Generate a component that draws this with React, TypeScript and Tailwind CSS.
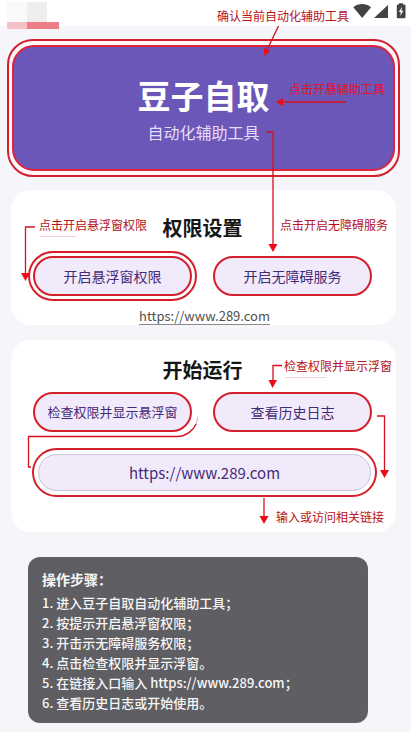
import type { ReactNode } from "react";

const steps = [
  "进入豆子自取自动化辅助工具；",
  "按提示开启悬浮窗权限；",
  "开击示无障碍服务权限；",
  "点击检查权限并显示浮窗。",
  "在链接入口输入 https://www.289.com；",
  "查看历史日志或开始使用。"
];

type ArrowProps = {
  className: string;
  width: number;
  height: number;
  line: string;
  head?: string;
  children?: ReactNode;
};

function Arrow({ className, width, height, line, head, children }: ArrowProps) {
  return (
    <svg
      aria-hidden="true"
      width={width}
      height={height}
      viewBox={`0 0 ${width} ${height}`}
      className={`pointer-events-none absolute z-10 ${className}`}
      fill="none"
    >
      {children}
      <path d={line} stroke="#d8101c" strokeWidth="1.3" />
      {head && <path d={head} fill="#ee0a18" />}
    </svg>
  );
}

function Note({ className, children }: { className: string; children: ReactNode }) {
  return (
    <span className={`pointer-events-none absolute z-10 whitespace-nowrap text-xs leading-4 ${className}`}>
      {children}
    </span>
  );
}

function PillButton({ className = "text-sm", children }: { className?: string; children: ReactNode }) {
  return (
    <button
      type="button"
      className={`h-10 whitespace-nowrap rounded-full border-2 border-[#d3202b] bg-[#f1eafb] text-[#452a78] ${className}`}
    >
      {children}
    </button>
  );
}

function StatusBar() {
  return (
    <header className="relative flex h-[26px] items-start justify-between bg-white pl-[7px] pr-1">
      <div aria-hidden="true" className="relative z-10 pt-0.5">
        <div className="flex h-5">
          <span className="w-5 bg-[#f9f9f9]" />
          <span className="w-5 bg-[#eeeeee]" />
        </div>
        <div className="flex h-[7px]">
          <span className="w-5 bg-[#f6c0c8]" />
          <span className="w-5 bg-[#ef7d88]" />
          <span className="w-3 bg-[#eb8089]" />
        </div>
      </div>

      <div className="flex items-start gap-1">
        <span className="pt-2 text-xs leading-4 text-[#b5121b]">确认当前自动化辅助工具</span>
        <svg aria-hidden="true" width="54" height="16" viewBox="0 0 54 16" className="mt-[3px]" fill="#434343">
          <path d="M0.3 4.2C5.5 0 12.7 0 18 4.2L9.2 15Z" />
          <path d="M35 2V15H21Z" />
          <path d="M46 1.6V0.3H50V1.6H51.5Q52.5 1.6 52.5 2.6V14.2Q52.5 15.2 51.5 15.2H44.8Q43.8 15.2 43.8 14.2V2.6Q43.8 1.6 44.8 1.6Z" />
          <path d="M49 3.8L45.8 9H47.8L47.2 13L50.4 7.8H48.4Z" fill="#fff" />
        </svg>
      </div>
      <Arrow
        className="right-[131px] top-[26px]"
        width={18}
        height={31}
        line="M16.5 0L4.5 25"
        head="M2.5 30L1.6 22L8.2 24.6Z"
      />
    </header>
  );
}

export default function App() {
  return (
    <div
      className="min-h-screen bg-[#f5f5fa] pb-2"
      style={{ fontFamily: '"Noto Sans CJK SC", "Noto Sans", sans-serif' }}
    >
      <StatusBar />

      <main className="pl-[11px] pr-[15px] pt-[13px]">
        <section className="relative -mx-1 rounded-[26px] border-2 border-[#d3202b] bg-[#fbf8fc] px-[3px] py-1">
          <div className="rounded-[22px] border-2 border-[#e2213a] bg-[#6b57b8] pb-6 pt-6 text-center text-white">
            <h1 className="text-[33px] font-bold leading-[48px]">豆子自取</h1>
            <p className="text-base leading-[26px] text-[#e6dcf8]">自动化辅助工具</p>
          </div>
          <Note className="right-[13px] top-10 text-[#ea0f2a]">点击开悬辅助工具</Note>
          <Arrow className="right-[50px] top-14" width={72} height={10} line="M6 5H70" head="M0 5L7 1V9Z" />
          <Arrow
            className="right-[120px] top-[90px]"
            width={14}
            height={122}
            line="M2.5 1H9V114"
            head="M9 121L4.5 113H13.5Z"
          />
        </section>

        <section className="relative mt-[13px] rounded-[20px] bg-white pl-[22px] pr-6 pt-6">
          <h2 className="text-center text-xl font-bold leading-7 text-[#161616]">权限设置</h2>
          <Note className="left-7 top-[27px] text-[#b5121b]">点击开启悬浮窗权限</Note>
          <Note className="right-2 top-[27px] text-[#b5121b]">点击开启无障碍服务</Note>
          <Arrow className="left-2.5 top-9" width={60} height={56} line="M14 1H4.5V48" head="M4.5 55L0 47H9Z">
            <path d="M19 10.5H55" stroke="#f8cfd2" />
          </Arrow>
          <div className="mt-3.5 grid grid-cols-2 gap-[21px]">
            <PillButton className="text-sm outline-2 outline-offset-[3px] outline-[#d3202b]">开启悬浮窗权限</PillButton>
            <PillButton>开启无障碍服务</PillButton>
          </div>
          <div className="flex justify-center pl-1 pt-3">
            <a href="https://www.289.com" className="border-b border-[#8a8a8a] text-[13px] leading-4 text-[#505050]">
              https://www.289.com
            </a>
          </div>
        </section>

        <section className="relative mt-[15px] rounded-[20px] bg-white pb-[35px] pl-[22px] pr-6 pt-4">
          <h2 className="text-center text-xl font-bold leading-7 text-[#161616]">开始运行</h2>
          <Note className="right-1 top-[18px] text-[#b5121b]">检查权限并显示浮窗</Note>
          <Arrow
            className="right-[68px] top-6"
            width={60}
            height={25}
            line="M14 1.5H5V18"
            head="M4.5 24L0.5 16H9Z"
          >
            <path d="M17 13.5H58" stroke="#f8cfd2" />
          </Arrow>
          <div className="mt-2 grid grid-cols-2 gap-[21px]">
            <PillButton className="text-[13px]">检查权限并显示悬浮窗</PillButton>
            <PillButton>查看历史日志</PillButton>
          </div>
          <Arrow className="left-4 top-[75px]" width={172} height={56} line="M4 52H1.5V21.5H150C160 21.5 167 14 169 9">
            <path d="M169 9Q170.500 6 170.500 2" stroke="#f0a0a6" />
          </Arrow>
          <Arrow
            className="right-[7px] top-[75px]"
            width={14}
            height={64}
            line="M2 1H9.5V56"
            head="M9.5 63L5 55H14Z"
          />
          <div className="-ml-px -mr-[5px] mt-4 rounded-full border-2 border-[#d3202b] p-1">
            <input
              type="url"
              aria-label="输入或访问相关链接"
              defaultValue="https://www.289.com"
              className="block h-[37px] w-full rounded-full border border-[#cbc3d8] bg-[#f1eafb] text-center text-[15px] text-[#452a78] outline-none"
            />
          </div>
          <Arrow
            className="bottom-2 right-[127px]"
            width={10}
            height={26}
            line="M5 0V19"
            head="M5 26L0.5 18H9.5Z"
          />
          <Note className="bottom-[7px] right-3 text-[#b5121b]">输入或访问相关链接</Note>
        </section>

        <section className="ml-[17px] mr-7 mt-[25px] rounded-xl bg-[#5f5e62] pb-2.5 pl-3.5 pt-3 text-[#f7f7f7]">
          <h2 className="text-sm font-bold leading-5">操作步骤：</h2>
          <ol className="pt-1 text-[13px] font-medium leading-5">
            {steps.map((step, i) => (
              <li key={step}>
                {i + 1}. {step}
              </li>
            ))}
          </ol>
        </section>
      </main>
    </div>
  );
}
